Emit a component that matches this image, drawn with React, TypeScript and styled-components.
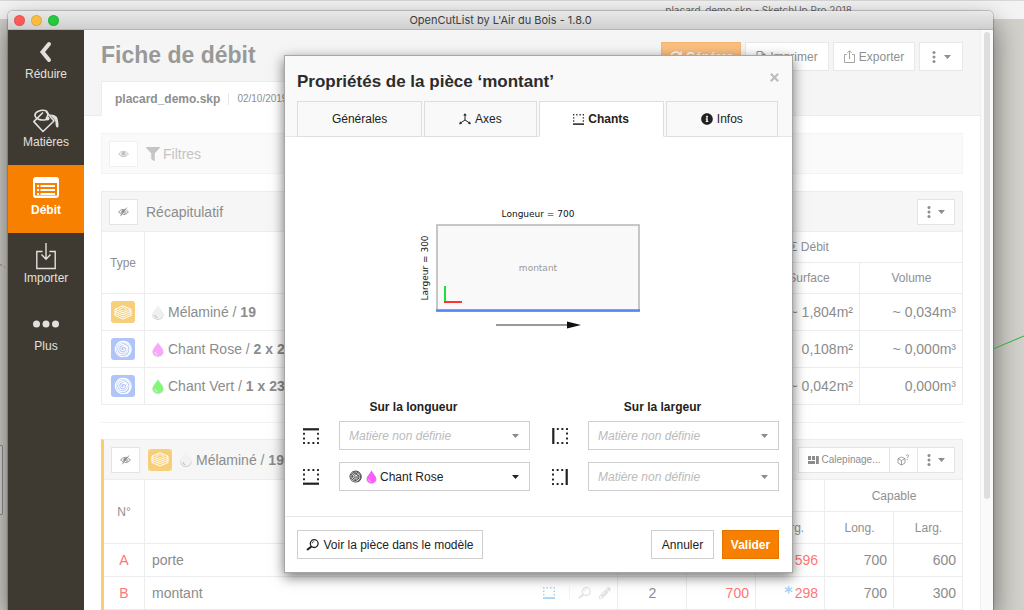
import React from "react";
import styled, { createGlobalStyle, css } from "styled-components";
import { FaFilter, FaInfoCircle, FaPencilAlt } from "react-icons/fa";

const sans = `"Liberation Sans", Arial, sans-serif`;

const GlobalStyle = createGlobalStyle`
  *, *::before, *::after { box-sizing: border-box; }
  body { margin: 0; font: 12px/16px ${sans}; color: #909090; }
  h1, h2, h3, p { margin: 0; }
  button, select { font: inherit; color: inherit; }
  svg { display: block; flex: none; }
`;

/* ---------- desktop and window ---------- */

const Desktop = styled.div`
  position: relative;
  height: 100vh;
  overflow: hidden;
  display: flex;
  padding: 11px 31px 0 8px;
  background: linear-gradient(#d8d8d8 0 1px, #f4f4f4 1px 19px, #d3d1cb 19px);
`;

const AppTitle = styled.div`
  position: absolute;
  top: 3px;
  right: 172px;
  font: 10px/14px Inter, sans-serif;
  color: #6a6a6a;
  white-space: nowrap;
`;

const AxisLine = styled.svg`
  position: absolute;
  right: 0;
  top: 330px;
`;

const AxisDots = styled.svg`
  position: absolute;
  left: 0;
  top: 264px;
`;

const Palette = styled.div`
  position: absolute;
  left: -8px;
  top: 445px;
  width: 11px;
  height: 70px;
  background: #dcdcdc;
  border: 1px solid #8f8f8f;
  border-radius: 2px;
`;

const Window = styled.div`
  position: relative;
  flex: 1;
  min-width: 0;
  display: flex;
  flex-direction: column;
  border-radius: 5px 5px 0 0;
  box-shadow: 0 12px 28px rgba(0, 0, 0, 0.55), 0 0 1px 1px rgba(0, 0, 0, 0.2);
  background: #fff;
`;

const TitleBar = styled.header`
  position: relative;
  flex: none;
  height: 19px;
  display: flex;
  align-items: center;
  justify-content: center;
  border-radius: 5px 5px 0 0;
  border-bottom: 1px solid #b4b4b4;
  background: linear-gradient(#e9e9e9, #cfcfcf);
  font: 11px/16px Inter, sans-serif;
  color: #3c3c3c;
`;

const Lights = styled.div`
  position: absolute;
  left: 6px;
  top: 4px;
  display: flex;
  gap: 6px;
`;

const Light = styled.span<{ $c: string }>`
  width: 11px;
  height: 11px;
  border-radius: 50%;
  background: ${(p) => p.$c};
  border: 1px solid rgba(0, 0, 0, 0.1);
`;

const Content = styled.div`
  flex: 1;
  min-height: 0;
  display: flex;
`;

/* ---------- sidebar ---------- */

const Sidebar = styled.nav`
  flex: none;
  width: 76px;
  background: #3e3a32;
`;

const SideItem = styled.button<{ $active?: boolean }>`
  width: 100%;
  height: 68px;
  padding: 9px 0 0;
  display: flex;
  flex-direction: column;
  align-items: center;
  border: 0;
  background: ${(p) => (p.$active ? "#f78000" : "transparent")};
  color: ${(p) => (p.$active ? "#fff" : "#e2e0dd")};
  font-weight: ${(p) => (p.$active ? 700 : 400)};
  line-height: 16px;
  &:first-child { height: 67px; padding-top: 8px; }
  svg { height: 28px; }
`;

/* ---------- main area ---------- */

const Main = styled.main`
  position: relative;
  flex: 1;
  min-width: 0;
  display: flex;
`;

const Page = styled.div`
  flex: 1;
  min-width: 0;
  overflow: hidden;
  border-right: 1px solid #f0f0f0;
`;

const Scrollbar = styled.div`
  flex: none;
  width: 12px;
  padding: 2px 3px;
  background: #fafafa;
`;

const Thumb = styled.div`
  height: 81%;
  border-radius: 4px;
  background: #dedede;
`;

const PageHead = styled.div`
  padding: 12px 17px 0;
  background: #f5f5f5;
  border-bottom: 1px solid #ececec;
`;

const HeadRow = styled.div`
  display: flex;
  align-items: center;
  justify-content: space-between;
  height: 29px;
`;

const PageTitle = styled.h1`
  margin-bottom: 3px;
  font-size: 23px;
  line-height: 28px;
  color: #999;
`;

const Row = styled.div<{ $gap?: number }>`
  display: flex;
  align-items: center;
  gap: ${(p) => p.$gap ?? 4}px;
`;

const Button = styled.button<{ $kind?: "plain" | "soft" | "primary"; $width?: number }>`
  height: 29px;
  width: ${(p) => (p.$width ? `${p.$width}px` : "auto")};
  padding: 0 10px;
  display: flex;
  align-items: center;
  justify-content: center;
  gap: 4px;
  white-space: nowrap;
  border: 1px solid #e8e8e8;
  background: #fff;
  ${(p) =>
    p.$kind === "soft" &&
    css`
      background: #fbbf80;
      border-color: #f5b775;
      color: #fff;
      font-weight: 700;
    `}
  ${(p) =>
    p.$kind === "plain" &&
    css`
      border-color: #cfcfcf;
      color: #222;
    `}
  ${(p) =>
    p.$kind === "primary" &&
    css`
      background: #f78000;
      border-color: #e27500;
      color: #fff;
      font-weight: 700;
    `}
`;

const SmallButton = styled.button<{ $width?: number; $faded?: boolean }>`
  flex: none;
  height: 26px;
  width: ${(p) => p.$width ?? 29}px;
  padding: 0;
  display: flex;
  align-items: center;
  justify-content: center;
  gap: 3px;
  font-size: 10px;
  border: 1px solid ${(p) => (p.$faded ? "#f0f0f0" : "#e4e4e4")};
  background: #fff;
  color: ${(p) => (p.$faded ? "#bdbdbd" : "#8c8c8c")};
`;

const ButtonGroup = styled.div`
  display: flex;
  button + button { margin-left: -1px; }
`;

const FileTab = styled.div`
  display: flex;
  align-items: center;
  width: 400px;
  height: 35px;
  margin: 10px 0 -1px;
  padding: 0 13px;
  border: 1px solid #ececec;
  border-bottom: 0;
  background: #fff;
  strong { color: #8f8f8f; }
  time {
    margin-left: 8px;
    padding-left: 8px;
    border-left: 1px solid #e6e6e6;
    font-size: 10px;
    line-height: 12px;
  }
`;

const Body = styled.div`
  padding: 17px 17px 0;
`;

const Panel = styled.section<{ $accent?: boolean; $faded?: boolean }>`
  margin-bottom: 17px;
  border: 1px solid ${(p) => (p.$faded ? "#f4f4f4" : "#ededed")};
  border-bottom: 0;
  ${(p) =>
    p.$accent &&
    css`
      border-left: 3px solid #f9cd72;
    `}
`;

const PanelHead = styled.div<{ $faded?: boolean }>`
  display: flex;
  align-items: center;
  justify-content: space-between;
  height: 40px;
  padding: 0 7px;
  border-bottom: 1px solid ${(p) => (p.$faded ? "#f4f4f4" : "#ededed")};
  background: ${(p) => (p.$faded ? "#fafafa" : "#f6f6f6")};
  color: ${(p) => (p.$faded ? "#c4c4c4" : "#8c8c8c")};
  font-size: 14px;
  h2 { font-size: 14px; font-weight: 400; }
`;

const Rule = styled.hr`
  height: 1px;
  margin: 0 0 16px;
  border: 0;
  background: #f3f3f3;
`;

const Table = styled.table<{ $row: number; $head: number }>`
  width: 100%;
  table-layout: fixed;
  border-collapse: separate;
  border-spacing: 0;
  th, td {
    padding: 0 6px 0 7px;
    border-bottom: 1px solid #ededed;
    border-left: 1px solid #ededed;
    white-space: nowrap;
  }
  tr > .first { border-left: 0; padding: 0; text-align: center; }
  th { height: ${(p) => p.$head}px; font-weight: 400; font-size: 12px; }
  td { height: ${(p) => p.$row}px; font-size: 14px; text-align: right; color: #8c8c8c; }
  td.name { text-align: left; }
  td.mid { text-align: center; }
  td.red { color: #f77; }
`;

const Named = styled.span`
  display: flex;
  align-items: center;
  gap: 4px;
`;

const Badge = styled.span<{ $edge?: boolean }>`
  display: inline-flex;
  align-items: center;
  justify-content: center;
  width: 24px;
  height: 22px;
  border-radius: 3px;
  vertical-align: middle;
  background: ${(p) => (p.$edge ? "#b0c4f7" : "#f7cf7a")};
  color: #fff;
`;

const Star = styled.span`
  margin-right: 2px;
  font: 700 16px/14px "DejaVu Sans", sans-serif;
  color: #a3d3f3;
`;

const Tools = styled.span`
  display: flex;
  align-items: center;
  color: #e2e2e2;
  gap: 8px;
  span { padding-right: 14px; border-right: 1px solid #f3f3f3; color: #9fd0ef; }
`;

const Split = styled.div`
  display: flex;
  align-items: center;
  justify-content: space-between;
`;

/* ---------- dialog ---------- */

const Dialog = styled.div`
  position: absolute;
  top: 25px;
  left: 0;
  right: 0;
  margin: 0 auto;
  width: 509px;
  max-width: 100%;
  border: 1px solid #a6a6a6;
  background: #fff;
  color: #222;
  box-shadow: 0 4px 12px rgba(0, 0, 0, 0.55);
`;

const DialogHead = styled.div`
  padding: 13px 13px 0 12px;
  background: #f9f9f9;
  border-bottom: 1px solid #e6e6e6;
`;

const DialogTitle = styled.h2`
  display: flex;
  justify-content: space-between;
  height: 32px;
  font-size: 17px;
  line-height: 26px;
  color: #2c2c2c;
`;

const Close = styled.button`
  width: 10px;
  height: 16px;
  padding: 0;
  border: 0;
  background: none;
  color: #bdbdbd;
  display: flex;
  align-items: center;
  justify-content: center;
`;

const Tabs = styled.div`
  display: flex;
  gap: 2px;
  margin: 0 1px -1px 0;
`;

const Tab = styled.button<{ $active?: boolean; $wide?: boolean }>`
  flex: ${(p) => (p.$wide ? "125 1 0" : "112 1 0")};
  height: 36px;
  padding: 0;
  display: flex;
  align-items: center;
  justify-content: center;
  gap: 4px;
  border: 1px solid #dedede;
  background: #f9f9f9;
  ${(p) =>
    p.$active &&
    css`
      background: #fff;
      border-bottom-color: #fff;
      font-weight: 700;
    `}
`;

const Drawing = styled.svg`
  width: 240px;
  height: 130px;
  margin: 66px auto;
`;

const EdgeForm = styled.form`
  display: grid;
  grid-template-columns: 1fr 1fr;
  column-gap: 16px;
  padding: 0 13px 25px 12px;
`;

const EdgeColumn = styled.fieldset`
  min-width: 0;
  margin: 0;
  padding: 0;
  border: 0;
  display: grid;
  row-gap: 12px;
  legend {
    width: 100%;
    margin-bottom: 6px;
    padding: 0;
    text-align: center;
    font-weight: 700;
    line-height: 16px;
  }
`;

const Field = styled.label`
  display: grid;
  grid-template-columns: 28px 1fr;
  column-gap: 14px;
  align-items: center;
  justify-items: center;
`;

const SelectBox = styled.span<{ $empty?: boolean }>`
  justify-self: stretch;
  height: 29px;
  padding: 0 10px 0 9px;
  display: flex;
  align-items: center;
  gap: 3px;
  border: 1px solid #cfcfcf;
  color: ${(p) => (p.$empty ? "#bbb" : "#222")};
  font-style: ${(p) => (p.$empty ? "italic" : "normal")};
  select {
    flex: 1;
    min-width: 0;
    padding: 0;
    border: 0;
    appearance: none;
    background: none;
    font-style: inherit;
  }
`;

const DialogFoot = styled.div`
  display: flex;
  justify-content: space-between;
  padding: 13px 13px 13px 12px;
  border-top: 1px solid #e6e6e6;
`;

/* ---------- icons ---------- */

const Caret = ({ color = "currentColor" }: { color?: string }) => (
  <svg width="7" height="4" viewBox="0 0 7 4"><path d="M0 0h7L3.5 4z" fill={color} /></svg>
);

const Kebab = () => (
  <svg width="4" height="12" viewBox="0 0 4 12" fill="currentColor">
    <circle cx="2" cy="1.6" r="1.5" /><circle cx="2" cy="6" r="1.5" /><circle cx="2" cy="10.4" r="1.5" />
  </svg>
);

const Eye = ({ slash }: { slash?: boolean }) => (
  <svg width="11" height="10" viewBox="0 0 12 10" fill="none" stroke="currentColor">
    <path d="M.8 5C3 1.2 9 1.2 11.2 5 9 8.600 3 8.600 .8 5z" />
    <circle cx="6" cy="4.500" r="1.900" fill="currentColor" stroke="none" />
    <path d="M3.600 4.200a2.500 2.500 0 1 0 4.800 0" />
    {slash && <><path d="M3.500 9.800 10.500 .4" stroke="#fff" strokeWidth=".9" /><path d="M2.600 9.600 9.600 .2" /></>}
  </svg>
);

const EdgeIcon = ({ side, size = 16 }: { side: "top" | "bottom" | "left" | "right"; size?: number }) => {
  const turn = { bottom: 0, left: 90, top: 180, right: 270 }[side];
  const dots: [number, number][] = [[1, 1], [5.6, 1], [10.4, 1], [15, 1], [1, 5.6], [15, 5.6], [1, 10.2], [15, 10.2]];
  return (
    <svg width={size} height={size} viewBox="0 0 16 16" fill="currentColor">
      <g transform={`rotate(${turn} 8 8)`}>
        {dots.map(([x, y]) => <rect key={`${x}-${y}`} x={x - 1} y={y - 1} width="2" height="2" rx=".5" />)}
        <rect x="0" y="13.600" width="16" height="2.200" />
      </g>
    </svg>
  );
};

const Layers = () => (
  <svg width="18" height="15" viewBox="0 0 18 15" fill="none" stroke="currentColor" strokeLinejoin="round">
    <path d="M9 .8 17 4.300 9 7.800 1 4.300z" />
    <path d="M5 4.300 9 2.600 13 4.300 9 6z" strokeWidth=".7" />
    <path d="M1 6.300 9 9.800 17 6.300M1 8.400 9 11.900 17 8.400M1 10.500 9 14 17 10.500M1 4.300v6.200M17 4.300v6.200" />
  </svg>
);

const Spiral = ({ size = 18 }: { size?: number }) => (
  <svg width={size} height={size} viewBox="0 0 18 18" fill="none" stroke="currentColor" strokeWidth="1.100">
    <path d="M9 9a1 1 0 0 1 1.500 1A2.200 2.200 0 0 1 6.700 9.400 3 3 0 0 1 12 7.500 3.800 3.800 0 0 1 9.300 13 4.300 4.300 0 0 1 6 5.700 5 5 0 0 1 14 9.500 5.500 5.500 0 0 1 4.500 13 6 6 0 0 1 7 3.200 6.600 6.600 0 0 1 15.800 10.500 7 7 0 0 1 5 15.500 7.500 7.500 0 0 1 2.500 5 8 8 0 0 1 15.500 4.500 8 8 0 0 1 12 16.700" />
  </svg>
);

const Drop = ({ color, size = 15, pale }: { color: string; size?: number; pale?: boolean }) => (
  <svg width={size - 3} height={size} viewBox="0 0 12 15">
    <path d="M6 1.200C7.500 4 11.600 7 11.600 10a5.600 5 0 0 1-11.200 0C.4 7 4.500 4 6 1.200z" fill="rgba(0,0,0,.18)" />
    <path d="M6 .3C7.500 3.300 11.200 6.300 11.200 9.300a5.200 5 0 0 1-10.400 0C.8 6.300 4.500 3.300 6 .3z" fill={color} />
    <path d="M2.800 10Q3.200 12.300 5.500 12.700" fill="none" stroke={pale ? "#bbb" : "rgba(255,255,255,.6)"} />
  </svg>
);

const Magnifier = () => (
  <svg width="13" height="12" viewBox="0 0 13 12" fill="none" stroke="currentColor">
    <circle cx="8.200" cy="4.600" r="3.900" strokeWidth="1.300" />
    <path d="M5.500 7.500 1 11" strokeWidth="2.200" />
    <path d="M6.200 4.400a2 2 0 0 1 2-1.900" strokeWidth=".7" />
  </svg>
);

const AxesIcon = () => (
  <svg width="12" height="12" viewBox="0 0 12 12" fill="none" stroke="currentColor">
    <path d="M6 1v6M6 7 1.500 10M6 7l4.500 3" />
    <path d="M4.200 2.600 6 .2 7.800 2.600zM.2 11.200 1 8.200 3 10.900zM11.800 11.200 11 8.200 9 10.900z" fill="currentColor" stroke="none" />
  </svg>
);

const ShareIcon = () => (
  <svg width="11" height="13" viewBox="0 0 11 13" fill="none" stroke="currentColor" strokeWidth=".8">
    <path d="M3 4.500H.5v8h10v-8H8M5.500 9V1M3.300 3 5.500.8 7.700 3" />
  </svg>
);

const PageIcon = () => (
  <svg width="10" height="12" viewBox="0 0 10 12" fill="none" stroke="currentColor">
    <path d="M1 .5h5l3 3v8H1zM6 .5v3h3" />
  </svg>
);

const RefreshIcon = () => (
  <svg width="12" height="12" viewBox="0 0 12 12" fill="none" stroke="currentColor" strokeWidth="1.600">
    <path d="M10.800 7A5 5 0 1 1 9.600 2.600" />
    <path d="M11.800 0v4.600H7.200z" fill="currentColor" stroke="none" />
  </svg>
);

const CutIcon = () => (
  <svg width="11" height="8" viewBox="0 0 11 8" fill="currentColor">
    <path d="M0 0h3v4H0zM4 0h3v4H4zM0 5h7v3H0zM8 0h2.800v8H8z" />
  </svg>
);

const BoxHelp = () => (
  <svg width="13" height="12" viewBox="0 0 13 12" fill="none" stroke="currentColor" strokeWidth=".8">
    <path d="M4.500 3 8 4.600v4.400l-3.500 2L1 9V4.600zM1 4.600l3.500 2 3.500-2M4.500 6.600V11" />
    <path d="M9 1.600Q10.500 0 11.600 1.400 12 2.600 10.300 3.300V4.200M10.300 5v.9" />
  </svg>
);

const sideIcons: Record<string, React.ReactNode> = {
  back: <svg width="14" height="28" viewBox="0 0 14 28" fill="none" stroke="currentColor" strokeWidth="4" strokeLinecap="round"><path d="M10 6 3.500 14l6.500 8" /></svg>,
  paint: (
    <svg width="28" height="28" viewBox="0 0 28 28" fill="none" stroke="currentColor" strokeWidth="1.600">
      <path d="M11 6.500 1.800 15.600 11 25.500 22 15 14 5.500" strokeLinejoin="round" />
      <path d="M14.500 13.500C9 15 3.500 13 3 9.500S9 3.500 13 4.500 16 9 14.500 13.500" />
      <circle cx="15.500" cy="12.500" r="2" fill="currentColor" stroke="none" />
      <path d="M17 8.500c5 0 8 1.500 8.500 4 1 4 1.500 8 .5 9-2 .5-2.500-2-2.500-5 0-3-3-5-6.500-8z" fill="currentColor" stroke="none" />
    </svg>
  ),
  list: (
    <svg width="26" height="28" viewBox="0 0 26 28" fill="currentColor">
      <path fillRule="evenodd" d="M3 3h20a3 3 0 0 1 3 3v15a3 3 0 0 1-3 3H3a3 3 0 0 1-3-3V6a3 3 0 0 1 3-3zM2 9v12.500h22V9z" />
      <path d="M4 11h2v2H4zM7.500 11H22v2H7.500zM4 15h2v2H4zM7.500 15H22v2H7.500zM4 19h2v2H4zM7.500 19H22v2H7.500z" />
    </svg>
  ),
  inbox: (
    <svg width="20" height="28" viewBox="0 0 20 28" fill="none" stroke="currentColor" strokeWidth="1.400">
      <path d="M6.500 9.500H.8v17h18.400v-17h-5.700M10 1v16M5.500 12.500 10 17.200l4.500-4.700" />
    </svg>
  ),
  more: <svg width="26" height="28" viewBox="0 0 26 28" fill="currentColor"><circle cx="3.500" cy="14" r="3.500" /><circle cx="13" cy="14" r="3.500" /><circle cx="22.500" cy="14" r="3.500" /></svg>,
};

/* ---------- data ---------- */

const nav = [
  { icon: "back", label: "Réduire" },
  { icon: "paint", label: "Matières" },
  { icon: "list", label: "Débit", active: true },
  { icon: "inbox", label: "Importer" },
  { icon: "more", label: "Plus" },
];

const summary = [
  { edge: false, drop: "#efefef", pale: true, name: "Mélaminé / ", size: "19", area: "~ 1,804m²", volume: "~ 0,034m³" },
  { edge: true, drop: "#fba6fb", name: "Chant Rose / ", size: "2 x 23", area: "0,108m²", volume: "~ 0,000m³" },
  { edge: true, drop: "#85f67b", name: "Chant Vert / ", size: "1 x 23", area: "~ 0,042m²", volume: "0,000m³" },
];

const parts = [
  { id: "A", name: "porte", count: 2, length: 700, width: 596, rawLength: 700, rawWidth: 600 },
  { id: "B", name: "montant", count: 2, length: 700, width: 298, rawLength: 700, rawWidth: 300, tools: true },
];

const EdgeSelect = ({ side, label, value }: { side: "top" | "bottom" | "left" | "right"; label: string; value?: string }) => (
  <Field>
    <EdgeIcon side={side} />
    <SelectBox $empty={!value}>
      {value && <Row $gap={4}><Spiral size={13} /><Drop color="#fa5ffa" size={14} /></Row>}
      <select aria-label={label} defaultValue={value ?? ""}>
        <option value="">Matière non définie</option>
        <option value="Chant Rose">Chant Rose</option>
      </select>
      <Caret color={value ? "#222" : "#8a8a8a"} />
    </SelectBox>
  </Field>
);

const MenuButton = () => (
  <SmallButton $width={38} aria-label="Menu"><Row $gap={7}><Kebab /><Caret /></Row></SmallButton>
);

export default function App() {
  return (
    <>
      <GlobalStyle />
      <Desktop>
        <AppTitle>placard_demo.skp - SketchUp Pro 2018</AppTitle>
        <Palette />
        <Window>
          <TitleBar>
            <Lights><Light $c="#fc5b57" /><Light $c="#fdbc40" /><Light $c="#28c840" /></Lights>
            OpenCutList by L'Air du Bois - 1.8.0
          </TitleBar>
          <Content>
            <Sidebar>
              {nav.map((n) => (
                <SideItem key={n.label} $active={n.active}>{sideIcons[n.icon]}{n.label}</SideItem>
              ))}
            </Sidebar>
            <Main>
              <Page>
                <PageHead>
                  <HeadRow>
                    <PageTitle>Fiche de débit</PageTitle>
                    <Row>
                      <Button $kind="soft" $width={80}><RefreshIcon />Générer</Button>
                      <Button $width={84}><PageIcon />Imprimer</Button>
                      <Button $width={82}><ShareIcon />Exporter</Button>
                      <Button $width={44} aria-label="Menu"><Row $gap={8}><Kebab /><Caret /></Row></Button>
                    </Row>
                  </HeadRow>
                  <FileTab><strong>placard_demo.skp</strong><time>02/10/2019</time></FileTab>
                </PageHead>
                <Body>
                  <Panel $faded>
                    <PanelHead $faded>
                      <Row $gap={8}>
                        <SmallButton $faded aria-label="Afficher"><Eye /></SmallButton>
                        <Row $gap={3}><FaFilter size={14} /><h2>Filtres</h2></Row>
                      </Row>
                    </PanelHead>
                  </Panel>
                  <Panel>
                    <PanelHead>
                      <Row $gap={8}>
                        <SmallButton aria-label="Masquer"><Eye slash /></SmallButton>
                        <h2>Récapitulatif</h2>
                      </Row>
                      <MenuButton />
                    </PanelHead>
                    <Table $head={31} $row={37}>
                      <colgroup><col width="42" /><col /><col width="102" /><col width="102" /><col width="103" /></colgroup>
                      <thead>
                        <tr><th className="first" rowSpan={2}>Type</th><th rowSpan={2} /><th colSpan={3}>Σ Débit</th></tr>
                        <tr><th>Longueur</th><th>Surface</th><th>Volume</th></tr>
                      </thead>
                      <tbody>
                        {summary.map((s) => (
                          <tr key={s.name}>
                            <td className="first"><Badge $edge={s.edge}>{s.edge ? <Spiral /> : <Layers />}</Badge></td>
                            <td className="name">
                              <Named><Drop color={s.drop} pale={s.pale} /><span>{s.name}<b>{s.size}</b></span></Named>
                            </td>
                            <td />
                            <td>{s.area}</td>
                            <td>{s.volume}</td>
                          </tr>
                        ))}
                      </tbody>
                    </Table>
                  </Panel>
                  <Rule />
                  <Panel $accent>
                    <PanelHead>
                      <Row $gap={8}>
                        <SmallButton aria-label="Masquer"><Eye slash /></SmallButton>
                        <Badge><Layers /></Badge>
                        <Named><Drop color="#f2f2f2" pale /><span>Mélaminé / <b>19</b></span></Named>
                      </Row>
                      <ButtonGroup>
                        <SmallButton $width={92}><CutIcon />Calepinage...</SmallButton>
                        <SmallButton aria-label="Aide"><BoxHelp /></SmallButton>
                        <MenuButton />
                      </ButtonGroup>
                    </PanelHead>
                    <Table $head={32} $row={33}>
                      <colgroup><col width="40" /><col /><col width="69" /><col width="69" /><col width="69" /><col width="69" /><col width="69" /></colgroup>
                      <thead>
                        <tr><th className="first" rowSpan={2}>N°</th><th rowSpan={2} /><th rowSpan={2}>Qté</th><th colSpan={2}>Finie</th><th colSpan={2}>Capable</th></tr>
                        <tr><th>Long.</th><th>Larg.</th><th>Long.</th><th>Larg.</th></tr>
                      </thead>
                      <tbody>
                        {parts.map((p) => (
                          <tr key={p.id}>
                            <td className="first red">{p.id}</td>
                            <td className="name">
                              <Split>
                                {p.name}
                                {p.tools && <Tools><span><EdgeIcon side="bottom" size={12} /></span><Magnifier /><FaPencilAlt size={12} /></Tools>}
                              </Split>
                            </td>
                            <td className="mid">{p.count}</td>
                            <td className="red">{p.length}</td>
                            <td className="red">{p.tools && <Star>*</Star>}{p.width}</td>
                            <td>{p.rawLength}</td>
                            <td>{p.rawWidth}</td>
                          </tr>
                        ))}
                      </tbody>
                    </Table>
                  </Panel>
                </Body>
              </Page>
              <Scrollbar><Thumb /></Scrollbar>

              <Dialog role="dialog" aria-labelledby="dialog-title">
                <DialogHead>
                  <DialogTitle>
                    <span id="dialog-title">Propriétés de la pièce ‘montant’</span>
                    <Close aria-label="Fermer">
                      <svg width="9" height="9" viewBox="0 0 9 9" stroke="currentColor" strokeWidth="2.200"><path d="M.8.8l7.400 7.400M8.200.8.8 8.200" /></svg>
                    </Close>
                  </DialogTitle>
                  <Tabs role="tablist">
                    <Tab role="tab" $wide>Générales</Tab>
                    <Tab role="tab"><AxesIcon />Axes</Tab>
                    <Tab role="tab" $wide $active aria-selected><EdgeIcon side="bottom" size={11} />Chants</Tab>
                    <Tab role="tab"><FaInfoCircle size={12} />Infos</Tab>
                  </Tabs>
                </DialogHead>
                <Drawing viewBox="1 0 240 130" fontFamily="DejaVu Sans, sans-serif" fontSize="9">
                  <text x="120" y="14" textAnchor="middle" fill="#111">Longueur = 700</text>
                  <text x="10" y="65" textAnchor="middle" fill="#111" transform="rotate(-90 10 65)">Largeur = 300</text>
                  <rect x="19" y="22" width="202" height="86" fill="#f9f9f9" stroke="#b5b5b5" strokeWidth="1.500" />
                  <path d="M18 107.500h204" stroke="#5486f2" strokeWidth="2.500" />
                  <text x="120" y="68" textAnchor="middle" fill="#999">montant</text>
                  <path d="M27 83v16" stroke="#1fe03a" strokeWidth="2" />
                  <path d="M26 99h18" stroke="#f33" strokeWidth="2" />
                  <path d="M78 122h72" stroke="#777" strokeWidth="1.500" />
                  <path d="M149 118.500 163 122l-14 3.500z" fill="#111" />
                </Drawing>
                <EdgeForm>
                  <EdgeColumn>
                    <legend>Sur la longueur</legend>
                    <EdgeSelect side="top" label="Chant longueur 1" />
                    <EdgeSelect side="bottom" label="Chant longueur 2" value="Chant Rose" />
                  </EdgeColumn>
                  <EdgeColumn>
                    <legend>Sur la largeur</legend>
                    <EdgeSelect side="left" label="Chant largeur 1" />
                    <EdgeSelect side="right" label="Chant largeur 2" />
                  </EdgeColumn>
                </EdgeForm>
                <DialogFoot>
                  <Button $kind="plain" $width={186}><Magnifier />Voir la pièce dans le modèle</Button>
                  <Row $gap={8}>
                    <Button $kind="plain" $width={63}>Annuler</Button>
                    <Button $kind="primary" $width={57}>Valider</Button>
                  </Row>
                </DialogFoot>
              </Dialog>
            </Main>
          </Content>
        </Window>
        <AxisDots width="8" height="5" viewBox="0 0 8 5"><path d="M0 1h2M4 3h1" stroke="#a8573f" /></AxisDots>
        <AxisLine width="31" height="20" viewBox="0 0 31 20"><path d="M0 19 31 6" stroke="#2fae3b" /></AxisLine>
      </Desktop>
    </>
  );
}
